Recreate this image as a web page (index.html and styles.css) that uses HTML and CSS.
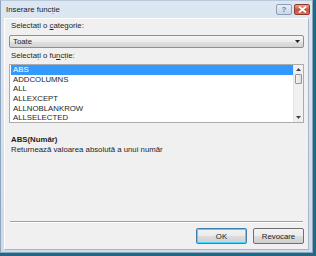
FILE: index.html
```html
<!DOCTYPE html>
<html lang="ro">
<head>
    <meta charset="UTF-8">
    <title>Inserare funcție</title>
    <link rel="stylesheet" href="styles.css">
</head>
<body>
    <div class="window">
        <div class="titlebar">
            <span class="title">Inserare funcție</span>
            <div class="caption-buttons">
                <span class="cap-btn help">?</span>
                <span class="cap-btn close">
                    <svg width="9" height="7" viewBox="0 0 9 7"><path d="M1 0.5 L8 6.5 M8 0.5 L1 6.5" stroke="#fff" stroke-width="1.8"/></svg>
                </span>
            </div>
        </div>
        <div class="client">
            <div class="label">Selectați o <u>c</u>ategorie:</div>
            <div class="combo">
                <span>Toate</span>
                <svg width="5" height="3" viewBox="0 0 5 3"><path d="M0 0 H5 L2.5 3 Z" fill="#222"/></svg>
            </div>
            <div class="label">Selectați o fu<u>n</u>cție:</div>
            <div class="listbox">
                <ul class="items">
                    <li class="selected">ABS</li>
                    <li>ADDCOLUMNS</li>
                    <li>ALL</li>
                    <li>ALLEXCEPT</li>
                    <li>ALLNOBLANKROW</li>
                    <li>ALLSELECTED</li>
                </ul>
                <div class="scrollbar">
                    <span class="arrow">
                        <svg width="5" height="3" viewBox="0 0 5 3"><path d="M0 3 H5 L2.5 0 Z" fill="#444"/></svg>
                    </span>
                    <span class="thumb"></span>
                    <span class="track"></span>
                    <span class="arrow">
                        <svg width="5" height="3" viewBox="0 0 5 3"><path d="M0 0 H5 L2.5 3 Z" fill="#444"/></svg>
                    </span>
                </div>
            </div>
            <div class="syntax">ABS(Număr)</div>
            <div class="description">Returnează valoarea absolută a unui număr</div>
            <div class="spacer"></div>
            <div class="separator"></div>
            <div class="buttons">
                <button class="btn default">OK</button>
                <button class="btn">Revocare</button>
            </div>
        </div>
    </div>
</body>
</html>
```

FILE: styles.css
```css
body {
    margin: 0;
    width: 316px;
    height: 256px;
    background-color: #1d6a86;
    font-family: 'Liberation Sans', Arial, sans-serif;
    font-size: 7.8px;
    color: #1e1e1e;
    overflow: hidden;
}

.window {
    width: 313px;
    height: 253px;
    box-sizing: border-box;
    background: linear-gradient(#dde7f2, #cddbea);
    border: 1px solid #8fa6be;
    border-top-color: #b9c9da;
    display: flex;
    flex-direction: column;
}

.titlebar {
    height: 17px;
    display: flex;
    align-items: center;
    justify-content: space-between;
    padding: 0 2px 0 5px;
}

.title {
    color: #1b1b1b;
}

.caption-buttons {
    display: flex;
    align-self: flex-start;
    margin-top: 3px;
}

.cap-btn {
    width: 16px;
    height: 11px;
    display: flex;
    align-items: center;
    justify-content: center;
    box-sizing: border-box;
    border: 1px solid #8b9fb6;
    border-radius: 2px;
}

.help {
    background: linear-gradient(#e6eef7, #c9d7e7);
    color: #6d7c8f;
    font-weight: bold;
    font-size: 8px;
    margin-right: 2px;
}

.close {
    background: linear-gradient(#e7a294, #c8503d 55%, #d6735f);
    border-color: #8d3a2c;
}

.client {
    flex: 1;
    margin: 0 3px 2px 3px;
    background-color: #f0f0f0;
    border: 1px solid #a6b6c8;
    border-left-color: #fff;
    border-top-color: #fff;
    padding: 1px 4px 5px 4px;
    display: flex;
    flex-direction: column;
}

.label {
    padding-left: 2px;
    height: 11px;
    line-height: 11px;
}

.combo {
    margin: 4px 0 2px 0;
    height: 13px;
    box-sizing: border-box;
    border: 1px solid #8e8f8f;
    border-radius: 2px;
    background: linear-gradient(#f4f4f4, #ececec 50%, #e0e0e0 51%, #d3d3d3);
    display: flex;
    align-items: center;
    justify-content: space-between;
    padding: 0 3px 0 3px;
}

.listbox {
    margin-top: 3px;
    height: 59px;
    box-sizing: border-box;
    border: 1px solid #acacac;
    background-color: #fff;
    display: flex;
}

.items {
    list-style: none;
    margin: 0;
    padding: 0 0 0 1px;
    flex: 1;
}

.items li {
    height: 9.7px;
    line-height: 9.7px;
    padding-left: 2px;
}

.items li.selected {
    background-color: #3399ff;
    color: #fff;
}

.scrollbar {
    width: 9px;
    background-color: #f0f0f0;
    display: flex;
    flex-direction: column;
    border-left: 1px solid #e6e6e6;
}

.arrow {
    height: 9px;
    display: flex;
    align-items: center;
    justify-content: center;
}

.thumb {
    height: 8px;
    margin: 0 1px;
    border: 1px solid #959595;
    border-radius: 1px;
    background: linear-gradient(90deg, #f3f3f3, #e0e0e0);
}

.track {
    flex: 1;
}

.syntax {
    margin-top: 12px;
    padding-left: 2px;
    font-weight: bold;
    height: 10px;
    line-height: 10px;
}

.description {
    padding-left: 2px;
    height: 10px;
    line-height: 10px;
}

.spacer {
    flex: 1;
}

.separator {
    height: 0;
    margin: 0 1px 0 1px;
    border-top: 1px solid #a0a0a0;
    border-bottom: 1px solid #fff;
}

.buttons {
    display: flex;
    justify-content: flex-end;
    gap: 6px;
    margin-top: 5px;
}

.btn {
    width: 51px;
    height: 16px;
    font-family: inherit;
    font-size: 7.8px;
    color: #1e1e1e;
    border: 1px solid #707070;
    border-radius: 2px;
    background: linear-gradient(#f2f2f2, #ebebeb 50%, #dddddd 51%, #cfcfcf);
    padding: 0;
}

.btn.default {
    border-color: #3c7fb1;
    box-shadow: inset 0 0 0 1px #48d8ff;
}
```
